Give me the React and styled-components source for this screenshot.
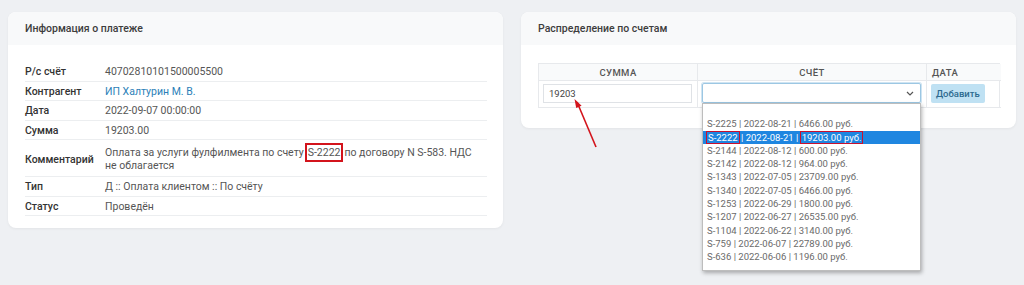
import React from "react";
import styled, { createGlobalStyle } from "styled-components";

const Global = createGlobalStyle`
  html, body { margin: 0; padding: 0; background: #eef0f3; }
  body { font-family: Roboto, "Liberation Sans", sans-serif; color: #555; }
`;

const Page = styled.div`
  display: grid;
  grid-template-columns: 495px 495px;
  column-gap: 18px;
  align-items: start;
  padding: 12px 8px;
  height: 285px;
  box-sizing: border-box;
`;

const Card = styled.section`
  position: relative;
  background: #fff;
  border-radius: 8px;
  box-shadow: 0 1px 3px rgba(0, 0, 0, 0.05);
`;

const CardHeader = styled.header`
  background: #f8f9fa;
  border-radius: 8px 8px 0 0;
  height: 33px;
  display: flex;
  align-items: center;
  padding: 0 17px;
  font-size: 10.5px;
  font-weight: 500;
  color: #3d3d3d;
`;

const CardBody = styled.div`
  padding: ${(p) => p.$pad};
`;

const InfoTable = styled.div`
  display: grid;
  grid-template-columns: 80px 1fr;
`;

const Cell = styled.div`
  font-size: 10.5px;
  line-height: 13px;
  padding: ${(p) => (p.$tall ? "6px 0 4px" : "3px 0 2.5px")};
  border-bottom: 1px solid #eceef0;
  display: flex;
  align-items: center;
  color: ${(p) => (p.$label ? "#333" : p.$link ? "#2b7fb8" : "#555")};
  font-weight: ${(p) => (p.$label ? 500 : 400)};
  padding-right: ${(p) => (p.$label ? "0" : "8px")};
`;

const Mark = styled.span`
  border: 2px solid #d3141c;
  padding: 1px 1px;
  margin: -3px 1px;
`;

const DistTable = styled.div`
  display: grid;
  grid-template-columns: 158px 229px 75px;
  border: 1px solid #e7e9ec;
  border-bottom: none;
`;

const HeadCell = styled.div`
  height: 16px;
  display: flex;
  align-items: center;
  justify-content: ${(p) => (p.$left ? "flex-start" : "center")};
  padding-left: ${(p) => (p.$left ? "5px" : "0")};
  font-size: 9.5px;
  font-weight: 500;
  letter-spacing: 0.4px;
  color: #555;
  background: #f9fafb;
  border-bottom: 1px solid #e7e9ec;
  border-left: ${(p) => (p.$first ? "none" : "1px solid #e7e9ec")};
`;

const BodyCell = styled.div`
  position: relative;
  padding: 2px 5px 4px 4px;
  border-left: ${(p) => (p.$first ? "none" : "1px solid #e7e9ec")};
  border-bottom: 1px solid #e7e9ec;
  display: flex;
  align-items: center;
`;

const Input = styled.div`
  box-sizing: border-box;
  width: 100%;
  height: 19px;
  border: 1px solid #dfe2e6;
  font-size: 9.5px;
  display: flex;
  align-items: center;
  padding-left: 5px;
  color: #444;
`;

const Select = styled.div`
  box-sizing: border-box;
  width: 219px;
  height: 20px;
  border: 1px solid #9cc7e3;
  box-shadow: 0 0 0 1px #cfe4f2;
  border-radius: 2px;
  display: flex;
  align-items: center;
  justify-content: flex-end;
  padding-right: 6px;
  color: #555;
`;

const AddButton = styled.button`
  font-family: inherit;
  border: none;
  background: #bfe1f3;
  color: #2d6a8f;
  font-size: 9.5px;
  font-weight: 500;
  height: 19px;
  padding: 0 5px;
  border-radius: 2px;
`;

const Dropdown = styled.ul`
  position: absolute;
  top: 22px;
  left: 4px;
  width: 219px;
  margin: 0;
  padding: 0 0 6px;
  list-style: none;
  background: #fff;
  border: 1px solid #bdbdbd;
  box-shadow: 1px 2px 4px rgba(0, 0, 0, 0.3);
  box-sizing: border-box;
  z-index: 5;
`;

const Option = styled.li`
  height: 13.3px;
  line-height: 13.3px;
  font-size: 9.5px;
  padding-left: 4px;
  white-space: nowrap;
  color: ${(p) => (p.$active ? "#fff" : "#6a6a6a")};
  background: ${(p) => (p.$active ? "#1f86e0" : "transparent")};
`;

const OptMark = styled.span`
  border: 1.5px solid #c8102e;
  padding: 0 1px;
  margin: 0 -1px;
`;

const Arrow = styled.svg`
  position: absolute;
  left: 52px;
  top: 87px;
  overflow: visible;
`;

const rows = [
  ["Р/с счёт", "40702810101500005500"],
  ["Контрагент", "ИП Халтурин М. В.", "link"],
  ["Дата", "2022-09-07 00:00:00"],
  ["Сумма", "19203.00"],
  ["Комментарий", "comment"],
  ["Тип", "Д :: Оплата клиентом :: По счёту"],
  ["Статус", "Проведён"],
];

const options = [
  "S-2225 | 2022-08-21 | 6466.00 руб.",
  "active",
  "S-2144 | 2022-08-12 | 600.00 руб.",
  "S-2142 | 2022-08-12 | 964.00 руб.",
  "S-1343 | 2022-07-05 | 23709.00 руб.",
  "S-1340 | 2022-07-05 | 6466.00 руб.",
  "S-1253 | 2022-06-29 | 1800.00 руб.",
  "S-1207 | 2022-06-27 | 26535.00 руб.",
  "S-1104 | 2022-06-22 | 3140.00 руб.",
  "S-759 | 2022-06-07 | 22789.00 руб.",
  "S-636 | 2022-06-06 | 1196.00 руб.",
];

export default function App() {
  return (
    <>
      <Global />
      <Page>
        <Card>
          <CardHeader>Информация о платеже</CardHeader>
          <CardBody $pad="17px 16px 12px 17px">
            <InfoTable>
              {rows.map(([label, value, kind]) => (
                <React.Fragment key={label}>
                  <Cell $label $tall={value === "comment"}>{label}</Cell>
                  <Cell $link={kind === "link"} $tall={value === "comment"}>
                    {value === "comment" ? (
                      <span>
                        Оплата за услуги фулфилмента по счету<Mark>S-2222</Mark>по договору N S-583. НДС не облагается
                      </span>
                    ) : (
                      value
                    )}
                  </Cell>
                </React.Fragment>
              ))}
            </InfoTable>
          </CardBody>
        </Card>
        <Card>
          <CardHeader>Распределение по счетам</CardHeader>
          <CardBody $pad="18px 16px 20px 17px">
            <DistTable>
              <HeadCell $first>СУММА</HeadCell>
              <HeadCell>СЧЁТ</HeadCell>
              <HeadCell $left>ДАТА</HeadCell>
              <BodyCell $first>
                <Input>19203</Input>
              </BodyCell>
              <BodyCell>
                <Select>
                  <svg width="8" height="5" viewBox="0 0 8 5">
                    <path d="M1 1l3 3 3-3" fill="none" stroke="#555" strokeWidth="1.2" />
                  </svg>
                </Select>
                <Dropdown>
                  <Option />
                  {options.map((o, i) =>
                    o === "active" ? (
                      <Option key={i} $active>
                        <OptMark>S-2222</OptMark> | 2022-08-21 | <OptMark>19203.00 руб.</OptMark>
                      </Option>
                    ) : (
                      <Option key={i}>{o}</Option>
                    )
                  )}
                </Dropdown>
              </BodyCell>
              <BodyCell>
                <AddButton>Добавить</AddButton>
              </BodyCell>
            </DistTable>
          </CardBody>
          <Arrow width="30" height="60">
            <path d="M23 48 L4 3" stroke="#d3141c" strokeWidth="1.6" fill="none" />
            <path d="M1.5 0 L3.2 9 L8.6 6.8 Z" fill="#d3141c" />
          </Arrow>
        </Card>
      </Page>
    </>
  );
}
